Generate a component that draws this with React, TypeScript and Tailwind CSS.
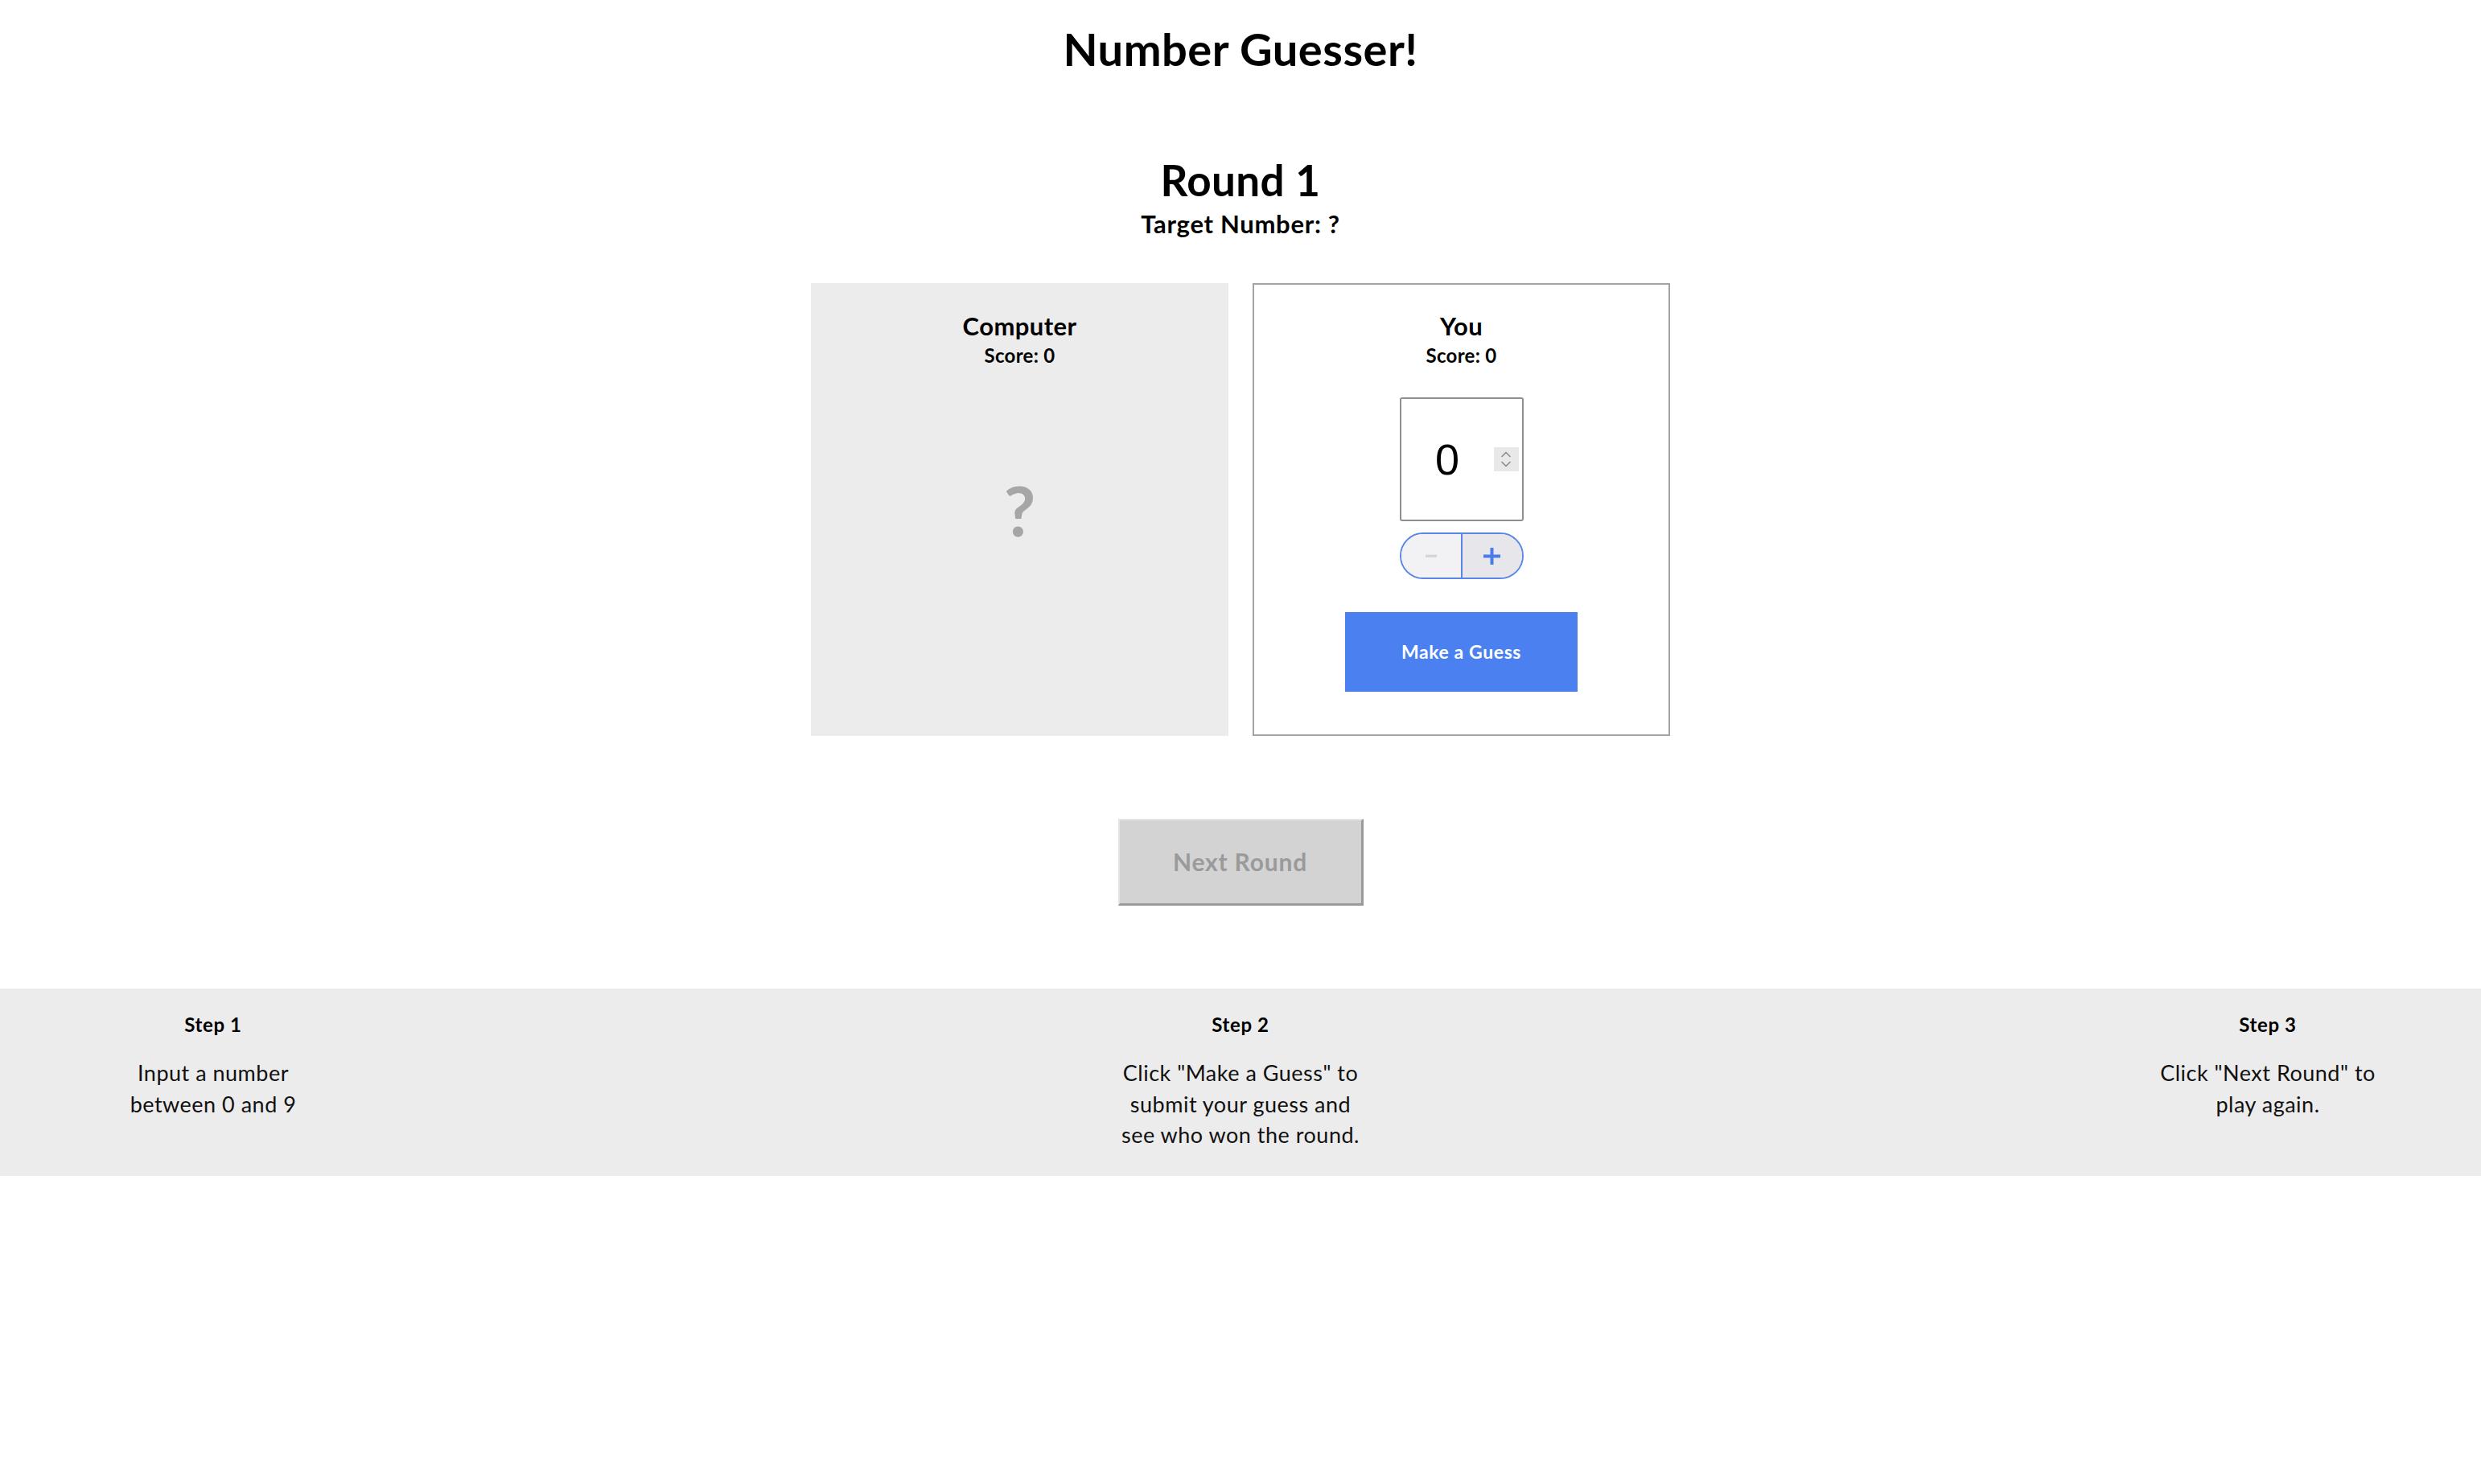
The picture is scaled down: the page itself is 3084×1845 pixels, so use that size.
import { ReactNode } from 'react'

const steps: { title: string; lines: string[] }[] = [
  { title: 'Step 1', lines: ['Input a number', 'between 0 and 9'] },
  { title: 'Step 2', lines: ['Click "Make a Guess" to', 'submit your guess and', 'see who won the round.'] },
  { title: 'Step 3', lines: ['Click "Next Round" to', 'play again.'] },
]

function CardHeader({ name, score }: { name: string; score: number }) {
  return (
    <div className="flex flex-col items-center">
      <h3 className="text-[31px] leading-[40px] font-bold tracking-[0.4px]">{name}</h3>
      <p className="mt-[2px] text-[24px] leading-[30px] font-bold tracking-[0.3px]">Score: {score}</p>
    </div>
  )
}

function Card({ className, children }: { className: string; children: ReactNode }) {
  return <div className={`w-[519px] h-[563px] border-2 pt-[31px] ${className}`}>{children}</div>
}

function ComputerCard() {
  return (
    <Card className="grid border-[#ececec] bg-[#ececec]">
      {/* header and the hidden guess share one cell so the ? sits in the card's middle */}
      <div className="[grid-area:1/1] self-start">
        <CardHeader name="Computer" score={0} />
      </div>
      <div className="[grid-area:1/1] self-center -mt-[31px] text-center text-[86px] leading-[100px] font-bold text-[#a6a6a6]">
        ?
      </div>
    </Card>
  )
}

function PlayerCard() {
  return (
    <Card className="flex flex-col items-center border-[#a3a3a3] bg-white">
      <CardHeader name="You" score={0} />

      {/* number input */}
      <div className="mt-[37px] w-[154px] h-[154px] flex items-center rounded-[3px] border-2 border-[#8f8f8f]">
        <span className="flex-1 text-center font-['Liberation_Sans',sans-serif] text-[54px] leading-none text-black">
          0
        </span>
        <div className="mr-[4px] w-[31px] h-[30px] bg-[#e8e8e8] flex items-center justify-center">
          <svg width="12" height="20" viewBox="0 0 12 20" fill="none" stroke="#8c8c8c" strokeWidth="1.6" strokeLinecap="round" strokeLinejoin="round">
            <path d="M1 6.5 6 1.5 11 6.5" />
            <path d="M1 13.5 6 18.5 11 13.5" />
          </svg>
        </div>
      </div>

      {/* stepper */}
      <div className="mt-[14px] w-[154px] h-[58px] flex rounded-full overflow-hidden border-2 border-[#5a86e6]">
        <button className="flex-1 flex items-center justify-center bg-[#f2f2f5]">
          <svg width="14" height="4" viewBox="0 0 14 4">
            <rect x="0" y="0.5" width="14" height="3.5" fill="#d6d6d8" />
          </svg>
        </button>
        <button className="flex-1 flex items-center justify-center border-l-2 border-[#5a86e6] bg-[#e6e6eb]">
          <svg width="21" height="21" viewBox="0 0 21 21" fill="#4a7be8">
            <rect x="8.5" y="0" width="4" height="21" />
            <rect x="0" y="8.5" width="21" height="4" />
          </svg>
        </button>
      </div>

      <button className="mt-[41px] w-[289px] h-[99px] bg-[#4b80f0] text-white text-[23px] font-bold tracking-[0.6px]">
        Make a Guess
      </button>
    </Card>
  )
}

export default function App() {
  return (
    <div className="min-h-screen bg-white text-black font-['Lato','Liberation_Sans',sans-serif]">
      <header className="pt-[29px] text-center">
        <h1 className="text-[56px] leading-[64px] font-bold tracking-[0.5px]">Number Guesser!</h1>
      </header>

      <main className="mt-[101px] flex flex-col items-center">
        <h2 className="text-[53px] leading-[60px] font-bold tracking-[0.4px]">Round 1</h2>
        <p className="mt-[4px] text-[31px] leading-[40px] font-bold tracking-[0.7px]">Target Number: ?</p>

        <div className="mt-[54px] flex gap-[30px]">
          <ComputerCard />
          <PlayerCard />
        </div>

        <button
          disabled
          className="mt-[103px] w-[305px] h-[108px] bg-[#d3d3d3] border-t-2 border-l-2 border-b-[3px] border-r-[3px] border-t-[#e4e4e4] border-l-[#e4e4e4] border-b-[#9a9a9a] border-r-[#9a9a9a] text-[30px] font-bold tracking-[0.8px] text-[#9a9a9a]"
        >
          Next Round
        </button>
      </main>

      <footer className="mt-[103px] bg-[#ececec] px-[105px] pt-[30px] pb-[31px] flex justify-between">
        {steps.map((s) => (
          <div key={s.title} className="w-[320px] text-center">
            <h4 className="text-[24px] leading-[30px] font-bold tracking-[0.6px]">{s.title}</h4>
            <p className="mt-[26px] text-[27px] leading-[38.5px] tracking-[0.5px] text-[#111]">
              {s.lines.map((l) => (
                <span key={l} className="block whitespace-nowrap">
                  {l}
                </span>
              ))}
            </p>
          </div>
        ))}
      </footer>
    </div>
  )
}
